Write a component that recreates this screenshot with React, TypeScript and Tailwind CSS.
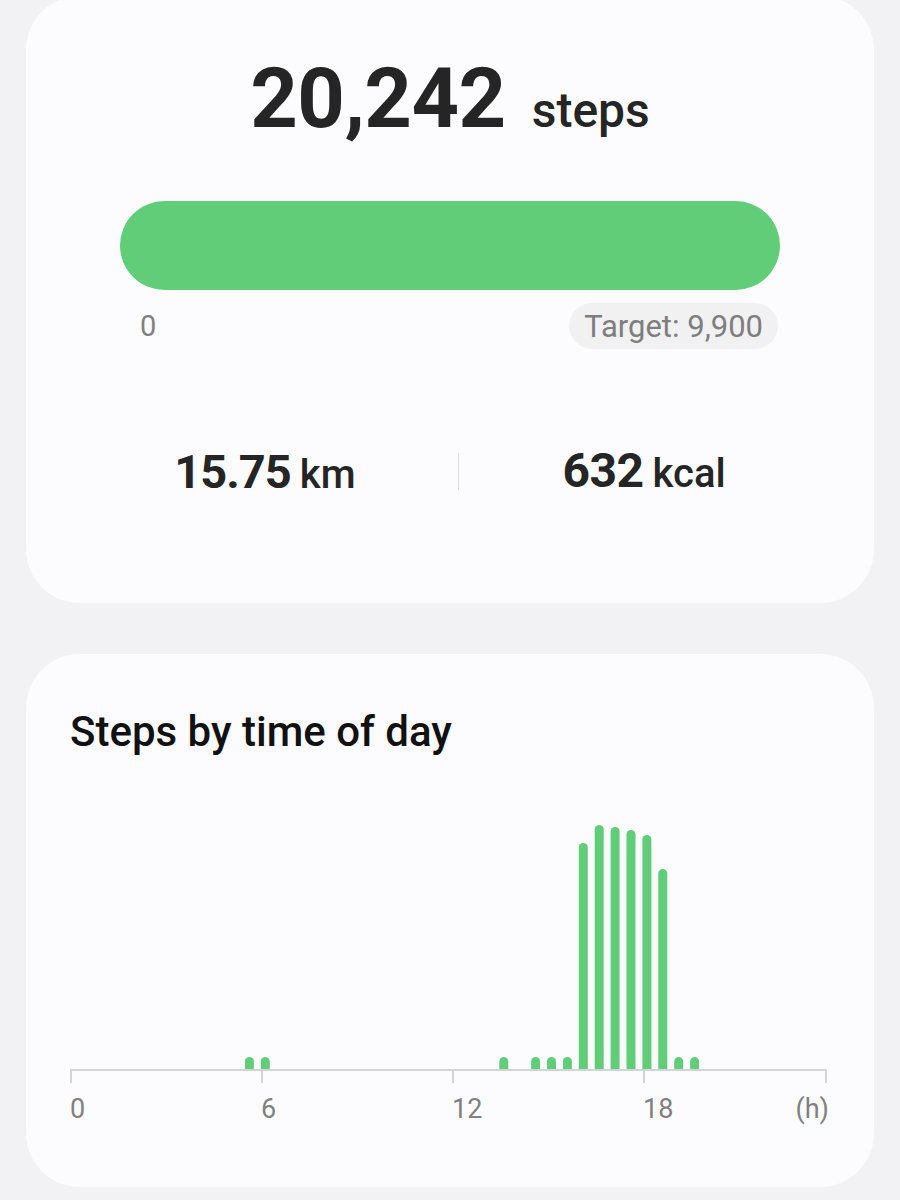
import React from "react";

const font = { fontFamily: "Roboto, 'Noto Sans', sans-serif" };

const bars: { slot: number; top: number }[] = [
  { slot: 11, top: 256 },
  { slot: 12, top: 256 },
  { slot: 27, top: 256 },
  { slot: 29, top: 256 },
  { slot: 30, top: 256 },
  { slot: 31, top: 256 },
  { slot: 32, top: 42 },
  { slot: 33, top: 24 },
  { slot: 34, top: 26 },
  { slot: 35, top: 29 },
  { slot: 36, top: 34 },
  { slot: 37, top: 68 },
  { slot: 38, top: 256 },
  { slot: 39, top: 256 },
];

function barPath(x: number, top: number, w: number, bottom: number) {
  const r = w / 2;
  return `M${x} ${bottom} L${x} ${top + r} A${r} ${r} 0 0 1 ${x + w} ${top + r} L${x + w} ${bottom} Z`;
}

function Chart() {
  const ticks = [1, 192, 383, 574, 756];
  const labels = [
    { x: 0, t: "0", anchor: "start" },
    { x: 191, t: "6", anchor: "start" },
    { x: 382, t: "12", anchor: "start" },
    { x: 573, t: "18", anchor: "start" },
    { x: 759, t: "(h)", anchor: "end" },
  ];
  return (
    <svg width="762" height="330" viewBox="0 0 762 330" className="block">
      {bars.map((b) => (
        <path key={b.slot} d={barPath(b.slot * 15.9, b.top, 9, 268)} fill="#62cd78" />
      ))}
      <line x1="1" y1="269" x2="757" y2="269" stroke="#d4d4d6" strokeWidth="2" />
      {ticks.map((x) => (
        <line key={x} x1={x} y1="268" x2={x} y2="282" stroke="#d4d4d6" strokeWidth="2" />
      ))}
      {labels.map((l) => (
        <text
          key={l.t}
          x={l.x}
          y="317"
          textAnchor={l.anchor as "start" | "end"}
          fill="#808082"
          fontSize="27"
          style={font}
        >
          {l.t}
        </text>
      ))}
    </svg>
  );
}

export default function App() {
  return (
    <div className="min-h-[1200px] w-[900px] bg-[#f2f2f4] px-[26px] overflow-hidden" style={font}>
      <div className="-mt-[4px] rounded-[54px] bg-[#fcfcfe] pt-[61px] pb-[108px]">
        <div className="flex items-baseline justify-center text-[#252525]">
          <span className="text-[83px] font-bold leading-none tracking-[-0.5px]">20,242</span>
          <span className="ml-[26px] text-[48px] font-medium leading-none">steps</span>
        </div>
        <div className="mx-[94px] mt-[61px]">
          <div className="h-[89px] rounded-full bg-[#62cd78]" />
          <div className="mt-[13px] flex items-center justify-between">
            <span className="pl-[20px] text-[29px] leading-none text-[#808082]">0</span>
            <span className="mr-[2px] flex h-[46px] items-center rounded-full bg-[#f1f1f2] px-[15px] text-[31px] leading-none text-[#7e7e80]">
              Target: 9,900
            </span>
          </div>
        </div>
        <div className="mt-[98px] flex items-center justify-center text-[#252525]">
          <div className="flex items-baseline">
            <span className="text-[47px] font-bold leading-none tracking-[-1px]">15.75</span>
            <span className="ml-[9px] text-[40px] font-medium leading-none">km</span>
          </div>
          <div className="mx-[103px] h-[37px] w-px bg-[#dcdcde]" />
          <div className="flex items-baseline">
            <span className="text-[48px] font-bold leading-none tracking-[-0.5px]">632</span>
            <span className="ml-[9px] text-[40px] font-medium leading-none">kcal</span>
          </div>
        </div>
      </div>
      <div className="mt-[51px] rounded-[54px] bg-[#fcfcfe] pl-[44px] pr-[40px] pt-[57px] pb-[56px]">
        <div className="text-[42px] font-medium leading-none text-[#111111]">Steps by time of day</div>
        <div className="mt-[48px]">
          <Chart />
        </div>
      </div>
    </div>
  );
}
